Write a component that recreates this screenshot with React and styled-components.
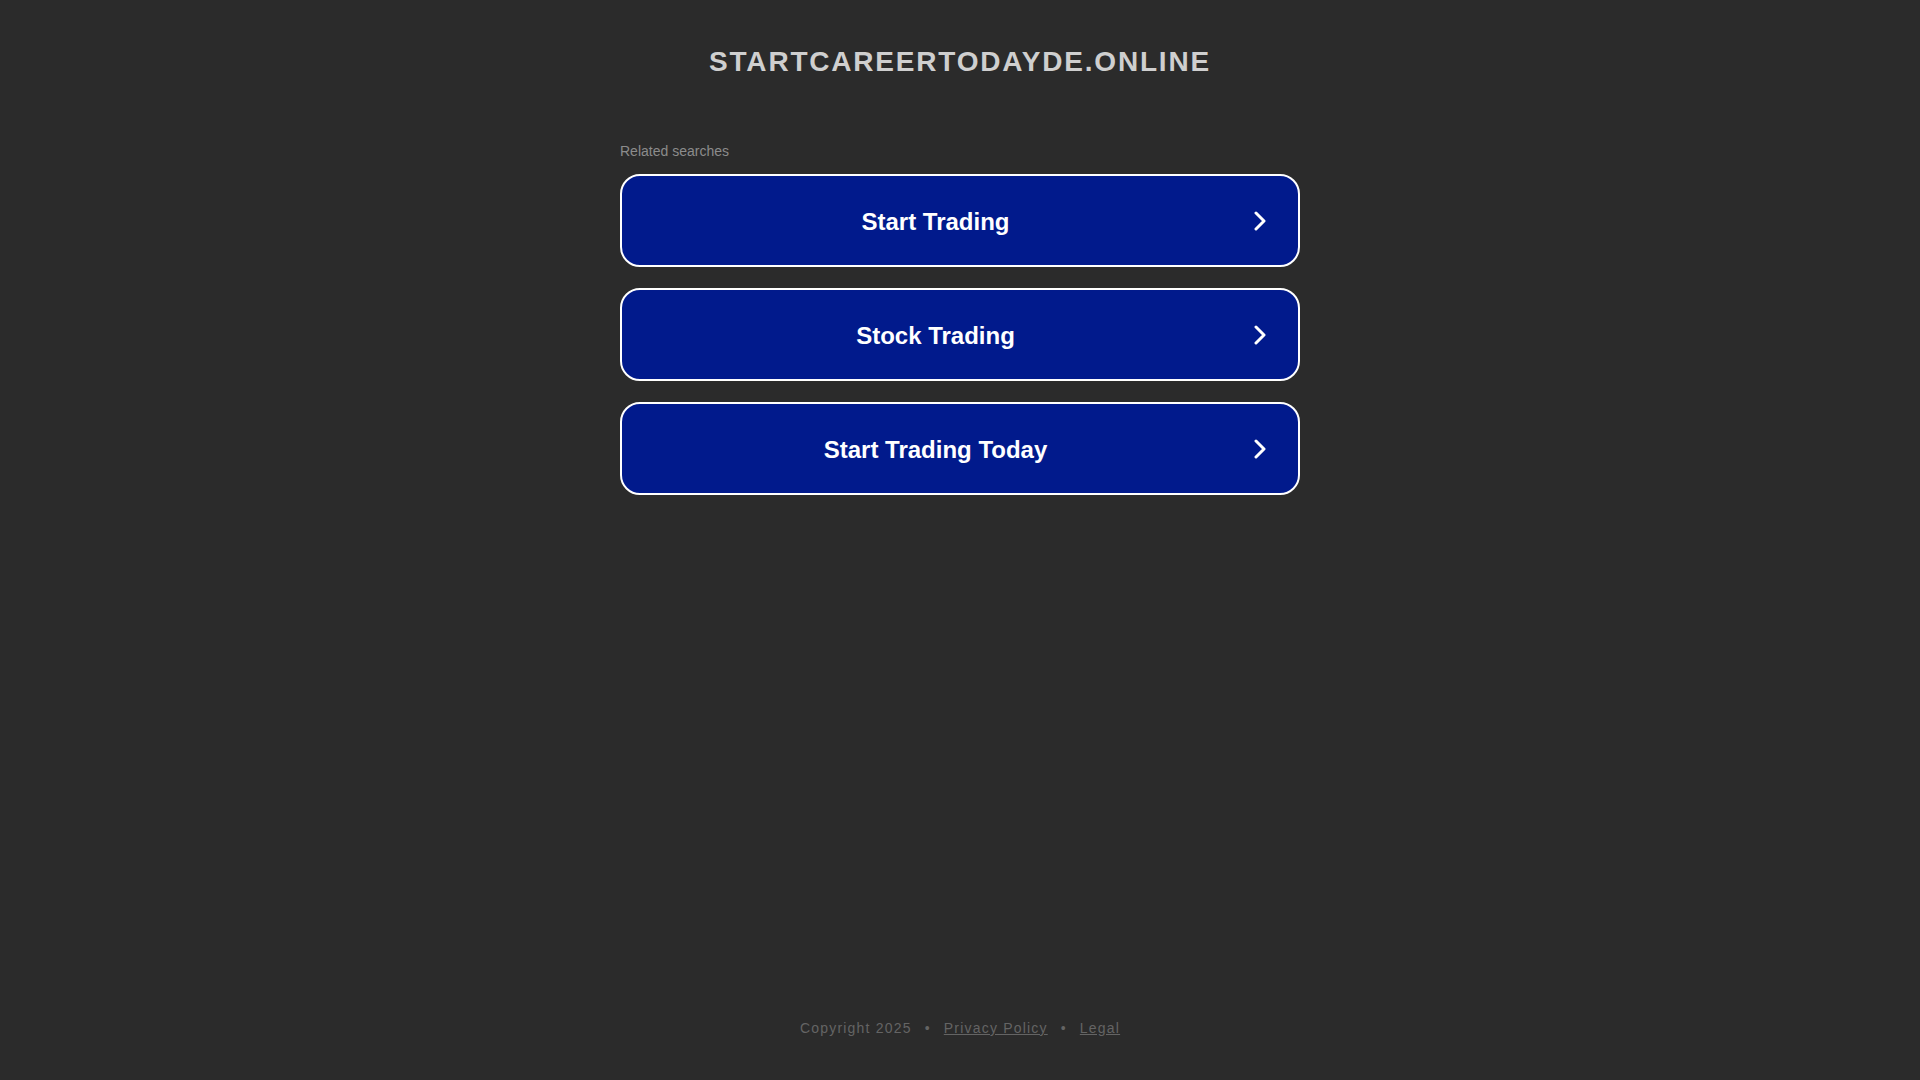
import React from "react";
import styled, { createGlobalStyle } from "styled-components";

const searches = ["Start Trading", "Stock Trading", "Start Trading Today"];

const GlobalStyle = createGlobalStyle`
    html, body {
        margin: 0;
        padding: 0;
        background: #2b2b2b;
        font-family: "Liberation Sans", Arial, sans-serif;
    }
`

function Chevron() {
    return (
        <ChevronIcon viewBox="0 0 12 20" aria-hidden="true">
            <path d="M2 2 L10 10 L2 18" fill="none" stroke="#fff" strokeWidth="3" strokeLinecap="round" strokeLinejoin="round" />
        </ChevronIcon>
    )
}

function App() {
    return (
        <React.Fragment>
            <GlobalStyle />
            <Page>
                <Header>
                    <Title>startcareertodayde.online</Title>
                </Header>
                <Main>
                    <RelatedLabel>Related searches</RelatedLabel>
                    <SearchList>
                        {searches.map(term => (
                            <SearchButton key={term} href="#">
                                <SearchText>{term}</SearchText>
                                <Chevron />
                            </SearchButton>
                        ))}
                    </SearchList>
                </Main>
                <Footer>
                    <span>Copyright 2025</span>
                    <Bullet>•</Bullet>
                    <FooterLink href="#">Privacy Policy</FooterLink>
                    <Bullet>•</Bullet>
                    <FooterLink href="#">Legal</FooterLink>
                </Footer>
            </Page>
        </React.Fragment>
    )
}

const Page = styled.div`
    display: flex;
    flex-direction: column;
    min-height: 100vh;
`

const Header = styled.header`
    padding-top: 46px;
    text-align: center;
`

const Title = styled.h1`
    margin: 0;
    font-size: 28px;
    line-height: 32px;
    font-weight: 700;
    letter-spacing: 1.8px;
    text-transform: uppercase;
    color: #cfcfcf;
`

const Main = styled.main`
    width: 680px;
    margin: 65px auto 0;
`

const RelatedLabel = styled.div`
    font-size: 14px;
    line-height: 16px;
    color: #8c8c8c;
`

const SearchList = styled.div`
    display: flex;
    flex-direction: column;
    gap: 21px;
    margin-top: 15px;
`

const SearchButton = styled.a`
    display: flex;
    align-items: center;
    height: 93px;
    box-sizing: border-box;
    padding: 2px 0 0 1px;
    border: 2px solid #fff;
    border-radius: 20px;
    background: #011a8c;
    color: #fff;
    text-decoration: none;
`

const SearchText = styled.span`
    flex: 1;
    text-align: center;
    font-size: 24px;
    font-weight: 700;
`

const ChevronIcon = styled.svg`
    width: 12px;
    height: 20px;
    margin: -2px 32px 0 6px;
`

const Footer = styled.footer`
    display: flex;
    justify-content: center;
    margin-top: auto;
    padding-bottom: 44px;
    font-size: 14px;
    line-height: 16px;
    letter-spacing: 1.2px;
    color: #646464;
`

const Bullet = styled.span`
    margin: 0 13px;
`

const FooterLink = styled.a`
    color: #646464;
    text-decoration: underline;
`

export default App;
